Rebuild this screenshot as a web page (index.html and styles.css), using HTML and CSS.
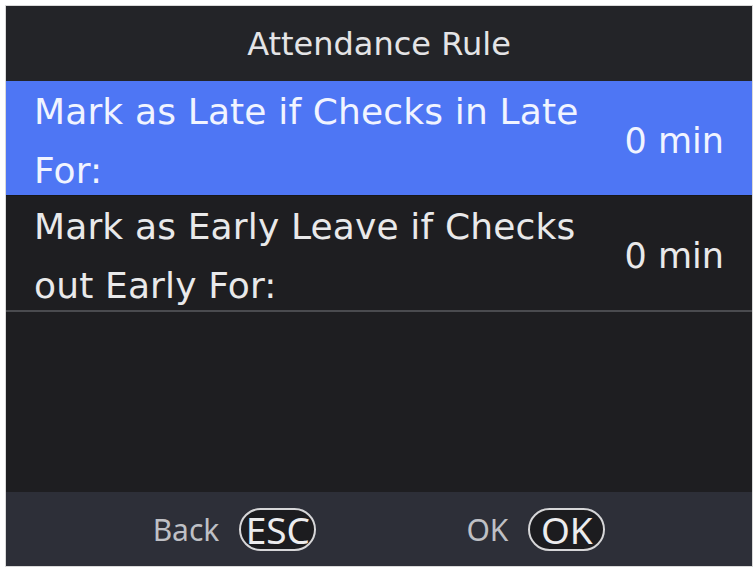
FILE: index.html
```html
<!DOCTYPE html>
<html lang="en">
<head>
<meta charset="utf-8">
<title>Attendance Rule</title>
<link rel="stylesheet" href="styles.css">
</head>
<body>
<div class="screen">
  <header class="title">Attendance Rule</header>
  <ul class="menu">
    <li class="item selected">
      <span class="label">Mark as Late if Checks in Late For:</span>
      <span class="value">0 min</span>
    </li>
    <li class="item">
      <span class="label">Mark as Early Leave if Checks out Early For:</span>
      <span class="value">0 min</span>
    </li>
  </ul>
  <div class="spacer"></div>
  <footer class="keys">
    <div class="key"><span class="key-text">Back</span><span class="pill">ESC</span></div>
    <div class="key"><span class="key-text">OK</span><span class="pill">OK</span></div>
  </footer>
</div>
</body>
</html>
```

FILE: styles.css
```css
html, body {
  margin: 0;
  padding: 0;
  background: #ffffff;
}

body {
  padding: 6px 2px 2px 6px;
  width: 754px;
  height: 568px;
  box-sizing: border-box;
}

.screen {
  width: 746px;
  height: 560px;
  display: flex;
  flex-direction: column;
  background: #1e1e21;
  font-family: "DejaVu Sans", sans-serif;
  box-shadow: 0 0 0 1px #d9d9d9;
  overflow: hidden;
}

.title {
  height: 75px;
  flex: none;
  display: flex;
  align-items: center;
  justify-content: center;
  background: #232428;
  color: #e4e4e6;
  font-size: 32px;
}

.menu {
  list-style: none;
  margin: 0;
  padding: 0;
  flex: none;
  border-bottom: 2px solid #4a4b4f;
}

.item {
  height: 114px;
  box-sizing: border-box;
  padding: 6px 28px 0 28px;
  display: flex;
  align-items: center;
  gap: 20px;
  color: #e9e9ea;
  font-size: 36px;
  line-height: 59px;
}

.item + .item {
  height: 115px;
  border-top: 1px solid #17171a;
}

.item.selected {
  background: #4e76f4;
  color: #f1f4ff;
}

.label {
  flex: 1;
  letter-spacing: 0.15px;
}

.value {
  flex: none;
  white-space: nowrap;
  font-size: 35px;
}

.spacer {
  flex: 1;
}

.keys {
  height: 74px;
  flex: none;
  background: #2d2f38;
  display: flex;
  align-items: center;
  justify-content: center;
  gap: 150px;
  font-family: "Noto Sans", sans-serif;
}

.key {
  display: flex;
  align-items: center;
  gap: 20px;
}

.key-text {
  color: #bfc0c5;
  font-size: 30px;
}

.pill {
  width: 77px;
  height: 43px;
  box-sizing: border-box;
  border: 2px solid #d6d6d8;
  border-radius: 22px;
  background: #1c1c1f;
  color: #ececee;
  font-size: 37px;
  line-height: 1;
  display: flex;
  align-items: center;
  justify-content: center;
}
```
